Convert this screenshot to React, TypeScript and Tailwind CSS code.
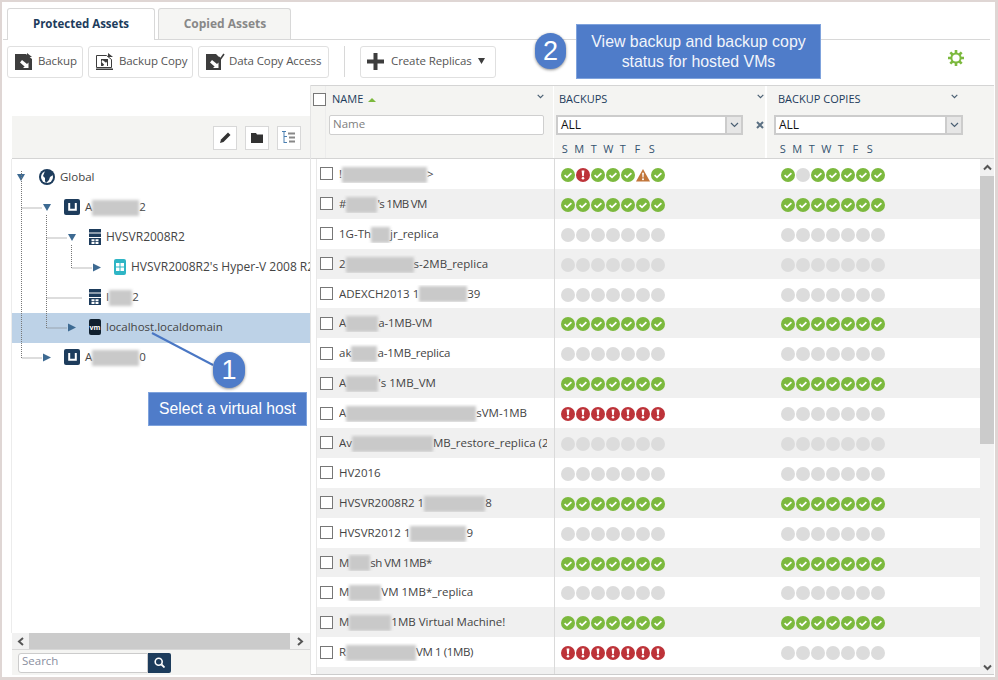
import React from "react";

type Kind = "ok" | "err" | "warn" | "none";
const O: Kind = "ok", E: Kind = "err", W: Kind = "warn", N: Kind = "none";
const allOk: Kind[] = [O, O, O, O, O, O, O];
const allNone: Kind[] = [N, N, N, N, N, N, N];
const allErr: Kind[] = [E, E, E, E, E, E, E];

type Row = { pre: string; blur: number; post: string; b: Kind[]; c: Kind[]; t?: string };
const rows: Row[] = [
  { pre: "!", blur: 85, post: ">", b: [O, E, O, O, O, W, O], c: [O, N, O, O, O, O, O] },
  { pre: "#", blur: 31, post: "'s 1MB VM", b: allOk, c: allOk, t: "tracking-[-0.7px]" },
  { pre: "1G-Th", blur: 19, post: "jr_replica", b: allNone, c: allNone },
  { pre: "2", blur: 68, post: "s-2MB_replica", b: allNone, c: allNone },
  { pre: "ADEXCH2013 1", blur: 48, post: "39", b: allNone, c: allNone },
  { pre: "A", blur: 32, post: "a-1MB-VM", b: allOk, c: allOk, t: "tracking-[-0.2px]" },
  { pre: "ak", blur: 26, post: "a-1MB_replica", b: allNone, c: allNone, t: "tracking-[-0.2px]" },
  { pre: "A", blur: 32, post: "'s 1MB_VM", b: allOk, c: allOk },
  { pre: "A", blur: 130, post: "sVM-1MB", b: allErr, c: allNone },
  { pre: "Av", blur: 81, post: "MB_restore_replica (2", b: allNone, c: allNone },
  { pre: "HV2016", blur: 0, post: "", b: allNone, c: allNone },
  { pre: "HVSVR2008R2 1", blur: 61, post: "8", b: allOk, c: allOk },
  { pre: "HVSVR2012 1", blur: 56, post: "9", b: allNone, c: allNone },
  { pre: "M", blur: 21, post: "sh VM 1MB*", b: allOk, c: allOk, t: "tracking-[-0.5px]" },
  { pre: "M", blur: 32, post: "VM 1MB*_replica", b: allNone, c: allNone },
  { pre: "M", blur: 42, post: "1MB Virtual Machine!", b: allOk, c: allOk },
  { pre: "R", blur: 70, post: "VM 1 (1MB)", b: allErr, c: allNone, t: "tracking-[-0.4px]" },
  { pre: "", blur: 0, post: "", b: [], c: [] },
];

function Status({ kind }: { kind: Kind }) {
  if (kind === "none") return <span className="block w-[14px] h-[14px] rounded-full bg-[#dcdcdc] mr-px" />;
  if (kind === "ok")
    return (
      <svg width="14" height="14" viewBox="0 0 14 14" className="mr-px block">
        <circle cx="7" cy="7" r="7" fill="#7cb93e" />
        <path d="M3.6 7.2 6 9.4 10.4 5.2" fill="none" stroke="#fff" strokeWidth="1.7" />
      </svg>
    );
  if (kind === "err")
    return (
      <svg width="14" height="14" viewBox="0 0 14 14" className="mr-px block">
        <circle cx="7" cy="7" r="7" fill="#bd3339" />
        <path d="M5.6 2.6h2.8L7.8 8.2H6.2z" fill="#fff" />
        <circle cx="7" cy="10.2" r="1.3" fill="#fff" />
      </svg>
    );
  return (
    <svg width="14" height="14" viewBox="0 0 14 14" className="mr-px block">
      <path d="M7 1 14 13.5H0z" fill="#c2763a" />
      <path d="M6.1 4.8h1.8L7.5 9.6h-1z" fill="#fff" />
      <circle cx="7" cy="11.2" r="1" fill="#fff" />
    </svg>
  );
}

function Dots({ list }: { list: Kind[] }) {
  return (
    <div className="flex">
      {list.map((k, i) => (
        <Status key={i} kind={k} />
      ))}
    </div>
  );
}

function Blur({ w }: { w: number }) {
  return <span className="inline-block h-[16px] align-middle bg-[#c9c9c9] blur-[1.5px]" style={{ width: w }} />;
}

function Chevron({ className = "" }: { className?: string }) {
  return (
    <svg width="9" height="6" viewBox="0 0 9 6" className={className}>
      <path d="M1 1l3.5 3.5L8 1" fill="none" stroke="#4a5f73" strokeWidth="1.2" />
    </svg>
  );
}
function SmallChevron({ className = "" }: { className?: string }) {
  return (
    <svg width="7" height="5" viewBox="0 0 7 5" className={className}>
      <path d="M.7.8 3.500 3.600 6.300.8" fill="none" stroke="#4a5f73" strokeWidth="1.200" />
    </svg>
  );
}

function ToolButton({ w, icon, label, gap = "gap-[5px]" }: { w: string; icon: React.ReactNode; label: string; gap?: string }) {
  return (
    <button className={`${w} ${gap} h-[32px] pb-[2px] flex items-center whitespace-nowrap pl-[7px] bg-white border border-[#e0e0e0] rounded-[3px] text-[11.5px] tracking-[-0.1px] text-[#555]`}>
      {icon}
      <span>{label}</span>
    </button>
  );
}

function BackupIcon() {
  return (
    <svg width="18" height="17" viewBox="0 0 18 17" className="shrink-0">
      <path d="M0 1h11l6 5v11H0z" fill="#3d3d3d" />
      <path d="M12 0l5 4h-5z" fill="#3d3d3d" />
      <path d="M7 7l5 4 1.500-1.500V15H8l1.600-1.600L5 9.500z" fill="#fff" />
    </svg>
  );
}
function BackupCopyIcon() {
  return (
    <svg width="18" height="17" viewBox="0 0 18 17" className="shrink-0">
      <path d="M.5 2.500h10l5 4v8H.5z" fill="#fff" stroke="#3d3d3d" />
      <path d="M12 0l5 4h-5z" fill="#3d3d3d" />
      <path d="M0 15.500h17V17H0z" fill="#3d3d3d" />
      <path d="M5 6h7v7H5z" fill="#3d3d3d" />
      <path d="M6.500 7l3.500 2.800 1-1V13H7l1.200-1.200L5.500 9z" fill="#fff" />
    </svg>
  );
}
function DataCopyIcon() {
  return (
    <svg width="19" height="17" viewBox="0 0 19 17" className="shrink-0">
      <path d="M0 1h10l5 5v11H0z" fill="#3d3d3d" />
      <path d="M12.500 4l2 2L18 1" fill="none" stroke="#3d3d3d" strokeWidth="1.600" />
      <path d="M6 7l5 4 1.500-1.500V15H7l1.600-1.600L4 9.500z" fill="#fff" />
    </svg>
  );
}

function GearIcon() {
  return (
    <svg width="16" height="16" viewBox="0 0 16 16">
      <g stroke="#7cb93e" strokeWidth="2.600">
        <path d="M8 0v3M8 13v3M0 8h3M13 8h3M2.300 2.300l2.200 2.200M11.500 11.500l2.200 2.200M13.700 2.300l-2.200 2.200M4.500 11.500l-2.200 2.200" />
      </g>
      <circle cx="8" cy="8" r="4.600" fill="#fff" stroke="#7cb93e" strokeWidth="2" />
    </svg>
  );
}

function Tri({ dir }: { dir: "down" | "right" }) {
  return (
    <svg width="8" height="9" viewBox="0 0 8 9" className="block shrink-0">
      {dir === "down" ? <path d="M0 1h8L4 8z" fill="#3d6a92" /> : <path d="M0 .5 8 4.500 0 8.500z" fill="#3d6a92" />}
    </svg>
  );
}
function GlobeIcon() {
  return (
    <svg width="16" height="16" viewBox="0 0 16 16" className="block shrink-0">
      <circle cx="8" cy="8" r="8" fill="#1d3c5c" />
      <circle cx="8" cy="8" r="6" fill="#fff" />
      <path d="M6 2h7l1 4-3 2-1 3-3 3-1-2V9L4 7z" fill="#1d3c5c" />
    </svg>
  );
}
function UIcon() {
  return (
    <span className="w-[16px] h-[16px] rounded-[2px] bg-[#1d3c5c] flex items-center justify-center shrink-0">
      <svg width="9" height="8" viewBox="0 0 9 8">
        <path d="M1.200 0v6.800h6.600V0" fill="none" stroke="#fff" strokeWidth="2" />
      </svg>
    </span>
  );
}
function ServerIcon() {
  return (
    <svg width="12" height="16" viewBox="0 0 12 16" className="block shrink-0">
      <path d="M0 0h12v3.500H0zM0 4.500h12V8H0zM0 9h12v7H0z" fill="#1d3c5c" />
      <path d="M2.500 10.300h3v2h-3zM6.500 10.300h3v2h-3zM2.500 13h3v2h-3zM6.500 13h3v2h-3z" fill="#fff" />
    </svg>
  );
}
function WinIcon() {
  return (
    <span className="w-[12px] h-[16px] rounded-[2px] bg-[#2fb5c5] flex items-center justify-center shrink-0">
      <svg width="8" height="8" viewBox="0 0 8 8">
        <path d="M0 0h3.500v3.500H0zM4.500 0H8v3.500H4.500zM0 4.500h3.500V8H0zM4.500 4.500H8V8H4.500z" fill="#fff" />
      </svg>
    </span>
  );
}
function VmIcon() {
  return (
    <span className="w-[12px] h-[16px] rounded-[2px] bg-[#10202e] flex items-center justify-center shrink-0 text-white text-[7px] font-bold leading-none">vm</span>
  );
}

const tree = [
  { pl: "pl-[5px]", tri: "down", icon: <GlobeIcon />, gap: "gap-[14px]", text: <>Global</>, tgap: "gap-[5px]", fs: "" },
  { pl: "pl-[31px]", tri: "down", icon: <UIcon />, gap: "gap-[13px]", text: <>A<Blur w={47} />2</>, tgap: "gap-[5px]", fs: "" },
  { pl: "pl-[56px]", tri: "down", icon: <ServerIcon />, gap: "gap-[13px]", text: <>HVSVR2008R2</>, tgap: "gap-[5px]", fs: "text-[12px]" },
  { pl: "pl-[81px]", tri: "right", icon: <WinIcon />, gap: "gap-[13px]", text: <>HVSVR2008R2's Hyper-V 2008 R2</>, tgap: "gap-[5px]", fs: "text-[12px]" },
  { pl: "pl-[77px]", tri: "", icon: <ServerIcon />, gap: "", text: <>I<Blur w={23} />2</>, tgap: "gap-[5px]", fs: "" },
  { pl: "pl-[56px]", tri: "right", icon: <VmIcon />, gap: "gap-[13px]", text: <>localhost.localdomain</>, tgap: "gap-[5px]", fs: "" },
  { pl: "pl-[31px]", tri: "right", icon: <UIcon />, gap: "gap-[13px]", text: <>A<Blur w={47} />0</>, tgap: "gap-[5px]", fs: "" },
];

const days = ["S", "M", "T", "W", "T", "F", "S"];

export default function App() {
  return (
    <div className="w-[998px] h-[680px] bg-[#dfd6d4] pt-[2px] pl-[2px] pr-[3px] pb-[3px] overflow-hidden font-['Open_Sans','Noto_Sans',sans-serif]">
      <div className="relative w-full h-full bg-white overflow-hidden flex flex-col">
        {/* tabs */}
        <div className="h-[37px] pt-[6px] pl-[5px] pr-[5px] flex items-end gap-[3px] shrink-0">
          <div className="relative w-[148px] h-[32px] -mb-px pb-[2px] z-10 bg-white border border-b-0 border-[#d8d8d8] rounded-t-[3px] flex items-center justify-center text-[11.5px] font-bold text-[#1d3c5c]">Protected Assets</div>
          <div className="w-[133px] h-[31px] pb-[1px] pl-[1px] bg-[#f5f5f3] border border-b-0 border-[#d8d8d8] rounded-t-[3px] flex items-center justify-center text-[12px] font-bold text-[#888]">Copied Assets</div>
        </div>
        <div className="h-px ml-[1px] mr-[5px] bg-[#d8d8d8] shrink-0" />
        {/* toolbar */}
        <div className="h-[45px] shrink-0 pl-[5px] pt-[6px] flex items-start">
          <ToolButton w="w-[76px]" icon={<BackupIcon />} label="Backup" />
          <div className="ml-[5px]"><ToolButton w="w-[105px]" icon={<BackupCopyIcon />} label="Backup Copy" /></div>
          <div className="ml-[5px]"><ToolButton w="w-[131px]" gap="gap-[4px]" icon={<DataCopyIcon />} label="Data Copy Access" /></div>
          <div className="ml-[15px] w-px h-[31px] bg-[#d8d8d8]" />
          <button className="ml-[15px] w-[136px] h-[32px] pb-[2px] flex items-center whitespace-nowrap pl-[6px] bg-white border border-[#e0e0e0] rounded-[3px] text-[11.5px] tracking-[-0.1px] text-[#555] gap-[7px]">
            <svg width="17" height="17" viewBox="0 0 17 17"><path d="M6.500 0h4v6.500H17v4h-6.500V17h-4v-6.500H0v-4h6.500z" fill="#3d3d3d" /></svg>
            <span>Create Replicas</span>
            <svg width="7" height="6" viewBox="0 0 7 6" className="-ml-[1px]"><path d="M0 0h7L3.500 6z" fill="#3d3d3d" /></svg>
          </button>
          <div className="ml-auto mr-[31px] mt-[4px]"><GearIcon /></div>
        </div>
        {/* main */}
        <div className="flex flex-1 min-h-0 ml-[9px] mr-[1px] mb-[2px]">
          {/* left */}
          <div className="w-[299px] flex flex-col pl-px shrink-0">
            <div className="h-[31px] shrink-0" />
            <div className="h-[43px] shrink-0 bg-[#f4f4f2] border-b border-[#d4d4d4] flex items-center justify-end gap-[8px] pr-[9px] pt-[1px]">
              <span className="w-[24px] h-[24px] bg-white border border-[#d8d8d8] flex items-center justify-center">
                <svg width="11" height="11" viewBox="0 0 11 11"><path d="M0 11l1-3.500L8 .5 10.500 3l-7 7z" fill="#333" /></svg>
              </span>
              <span className="w-[24px] h-[24px] bg-white border border-[#d8d8d8] flex items-center justify-center">
                <svg width="12" height="10" viewBox="0 0 12 10"><path d="M0 0h5l1 1.500h6V10H0z" fill="#333" /></svg>
              </span>
              <span className="w-[24px] h-[24px] bg-white border border-[#d8d8d8] flex items-center justify-center">
                <svg width="14" height="14" viewBox="0 0 14 14" fill="none" stroke="#4a7fb0"><path d="M0 .5h4M2 .5V12M2 5.500h3M2 11.500h3" /><path d="M6 2.500h7M7 6.500h6M7 10.500h6" stroke="#888" strokeWidth="2" /></svg>
              </span>
            </div>
            {/* tree */}
            <div className="relative flex-1 min-h-0 overflow-hidden -ml-px border-l border-[#ececec] pt-[4px] text-[11.5px] text-[#444]">
              <svg className="absolute left-0 top-0 z-10 pointer-events-none" width="298" height="220" fill="none" stroke="#777" strokeWidth="1" strokeDasharray="1 1">
                <path d="M9.500 12V199H30M9.500 49H30M34.500 56V169H55M34.500 79H55M34.500 139H70M59.500 86V109H80" />
              </svg>
              {tree.map((t, i) => (
                <div key={i} className={`relative h-[30px] pb-[2px] flex items-center ${t.pl} ${t.gap} ${t.fs} ${i === 5 ? "bg-[#bdd2e7]" : ""}`}>
                  {t.tri && <Tri dir={t.tri as "down" | "right"} />}
                  <div className={`flex items-center whitespace-nowrap ${t.tgap}`}>
                    {t.icon}
                    <span>{t.text}</span>
                  </div>
                </div>
              ))}
            </div>
            {/* h scroll */}
            <div className="h-[16px] shrink-0 flex items-center bg-[#f1f1f1]">
              <span className="w-[17px] flex justify-center"><svg width="7" height="9" viewBox="0 0 7 9"><path d="M6 1 2 4.500 6 8" fill="none" stroke="#555" strokeWidth="2" /></svg></span>
              <div className="flex-1 h-full bg-[#cbcbcb]" />
              <span className="w-[20px] flex justify-center"><svg width="7" height="9" viewBox="0 0 7 9"><path d="M1 1l4 3.500L1 8" fill="none" stroke="#555" strokeWidth="2" /></svg></span>
            </div>
            {/* search */}
            <div className="h-[26px] shrink-0 bg-[#f4f4f2] border-t border-[#d8d8d8] flex items-center pl-[6px]">
              <div className="w-[130px] h-[20px] bg-white border border-[#ccc] rounded-l-[3px] text-[11.5px] text-[#8a8fa0] pl-[3px] leading-[13px]">Search</div>
              <span className="w-[23px] h-[20px] bg-[#1d3c5c] rounded-r-[2px] flex items-center justify-center">
                <svg width="11" height="11" viewBox="0 0 11 11" fill="none" stroke="#fff"><circle cx="4.700" cy="4.700" r="3.500" strokeWidth="1.600" /><path d="M7.500 7.500 10.500 10.500" strokeWidth="1.800" /></svg>
              </span>
            </div>
          </div>
          {/* right */}
          <div className="flex-1 flex flex-col min-w-0 border-l border-[#e4e4e4]">
            <div className="h-[74px] shrink-0 bg-[#f4f4f2] border-y border-[#d4d4d4] flex text-[11px] text-[#1d3c5c]">
              <div className="w-[15px] border-r border-[#ececec] pt-[7px] pl-[2px] shrink-0">
                <span className="block w-[13px] h-[13px] border border-[#777] bg-white" />
              </div>
              <div className="w-[228px] shrink-0 pl-[3px] pr-[8px] border-r border-[#fff]">
                <div className="h-[27px] flex items-center pl-[3px] relative">
                  <span>NAME</span>
                  <svg width="8" height="4" viewBox="0 0 8 4" className="ml-[5px]"><path d="M4 0l4 4H0z" fill="#7cb93e" /></svg>
                  <SmallChevron className="absolute right-[1px] top-[8px]" />
                </div>
                <div className="h-[20px] w-[215px] mt-[2px] bg-white border border-[#cfcfcf] rounded-[2px] text-[11.5px] text-[#808080] pl-[3px] leading-[15px]">Name</div>
              </div>
              <div className="w-[213px] shrink-0 border-r-2 border-[#fff] pl-[2px]">
                <div className="h-[27px] flex items-center pl-[3px] relative">
                  <span>BACKUPS</span>
                  <SmallChevron className="absolute right-[1px] top-[8px]" />
                </div>
                <div className="flex items-center mt-[2px]">
                  <div className="w-[187px] h-[20px] bg-white border-2 border-[#ccc] flex items-center justify-between text-[12px] text-[#111] pl-[3px]">
                    ALL
                    <span className="w-[16px] h-[16px] bg-[#e6e6e6] border-l-2 border-[#ccc] flex items-center justify-center"><Chevron /></span>
                  </div>
                  <span className="ml-[13px]">
                    <svg width="8" height="8" viewBox="0 0 8 8"><path d="M1 1l6 6M7 1 1 7" stroke="#5b7083" strokeWidth="2" /></svg>
                  </span>
                </div>
                <div className="flex mt-[6px] pl-[1.5px] text-[11px] text-[#34536f]">
                  {days.map((d, i) => (
                    <span key={i} className="w-[14.5px] text-center">{d}</span>
                  ))}
                </div>
              </div>
              <div className="flex-1 pl-[7px]">
                <div className="h-[27px] flex items-center pl-[4px] relative w-[188px]">
                  <span>BACKUP COPIES</span>
                  <SmallChevron className="absolute right-[4px] top-[8px]" />
                </div>
                <div className="w-[189px] h-[20px] mt-[2px] bg-white border-2 border-[#ccc] flex items-center justify-between text-[12px] text-[#111] pl-[3px]">
                  ALL
                  <span className="w-[16px] h-[16px] bg-[#e6e6e6] border-l-2 border-[#ccc] flex items-center justify-center"><Chevron /></span>
                </div>
                <div className="flex mt-[6px] pl-[1.5px] text-[11px] text-[#34536f]">
                  {days.map((d, i) => (
                    <span key={i} className="w-[14.5px] text-center">{d}</span>
                  ))}
                </div>
              </div>
            </div>
            {/* rows */}
            <div className="flex flex-1 min-h-0 border-b border-[#ccc]">
              <div className="flex-1 min-w-0 ml-[5px] border-l border-[#e8e8e8] overflow-hidden">
                {rows.map((r, i) => (
                  <div key={i} className={`h-[29.9px] flex items-center ${i % 2 === 1 ? "bg-[#f0f0f0]" : "bg-white"}`}>
                    <div className="w-[238px] shrink-0 h-full flex items-center pl-[3px] border-r border-[#dadada] overflow-hidden whitespace-nowrap text-[11.5px] text-[#444]">
                      {r.b.length > 0 && <span className="w-[13px] h-[13px] shrink-0 border border-[#777] bg-white mr-[6px]" />}
                      <span className="w-[208px] overflow-hidden whitespace-nowrap">
                        {r.pre}
                        {r.blur > 0 && <Blur w={r.blur} />}
                        <span className={r.t}>{r.post}</span>
                      </span>
                    </div>
                    <div className="w-[226px] shrink-0 pl-[6px] pt-[2px]"><Dots list={r.b} /></div>
                    <div className="pt-[2px]"><Dots list={r.c} /></div>
                  </div>
                ))}
              </div>
              {/* v scroll */}
              <div className="w-[14px] shrink-0 bg-[#f1f1f1] flex flex-col items-center">
                <span className="h-[17px] flex items-center"><svg width="9" height="7" viewBox="0 0 9 7"><path d="M1 5.500 4.500 2 8 5.500" fill="none" stroke="#555" strokeWidth="2" /></svg></span>
                <div className="w-full h-[268px] bg-[#cbcbcb]" />
                <span className="mt-auto h-[13px] flex items-center"><svg width="9" height="7" viewBox="0 0 9 7"><path d="M1 1.500 4.500 5 8 1.500" fill="none" stroke="#555" strokeWidth="2" /></svg></span>
              </div>
            </div>
          </div>
        </div>
        {/* annotations */}
        <svg className="absolute left-[148px] top-[330px] z-20" width="70" height="40"><path d="M2 1 63 33" stroke="#4a77c4" strokeWidth="2" /></svg>
        <div className="absolute left-[211px] top-[350px] z-20 w-[32px] h-[36px] rounded-full bg-[#4f7cc9] text-white text-[27px] flex items-center justify-center shadow-[0_1px_3px_rgba(0,0,0,0.45)] font-['Liberation_Sans',sans-serif]">1</div>
        <div className="absolute left-[146px] top-[390px] z-20 w-[159px] h-[34px] bg-[#4f7cc9] border border-[#7fa3dd] text-white text-[15.7px] flex items-center justify-center font-['Liberation_Sans',sans-serif]">Select a virtual host</div>
        <div className="absolute left-[533px] top-[31px] z-20 w-[31px] h-[36px] rounded-full bg-[#4f7cc9] text-white text-[27px] flex items-center justify-center shadow-[0_1px_3px_rgba(0,0,0,0.45)] font-['Liberation_Sans',sans-serif]">2</div>
        <div className="absolute left-[574px] top-[22px] z-20 w-[245px] h-[55px] bg-[#4f7cc9] border border-[#7fa3dd] text-[#f2f5fb] text-[15.9px] leading-[20px] flex items-center justify-center text-center font-['Liberation_Sans',sans-serif]">View backup and backup copy<br />status for hosted VMs</div>
      </div>
    </div>
  );
}
